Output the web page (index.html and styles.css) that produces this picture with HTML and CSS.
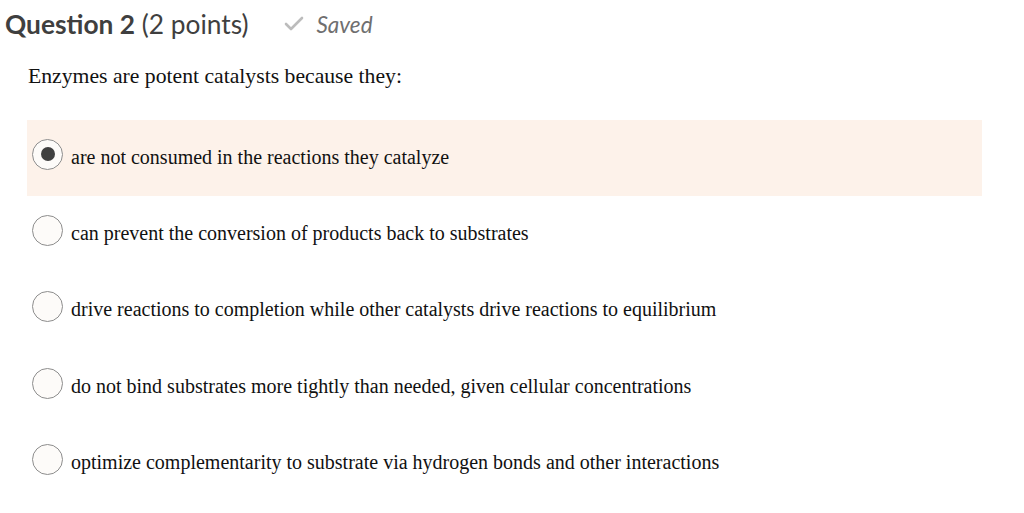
FILE: index.html
```html
<!DOCTYPE html>
<html>
<head>
<meta charset="utf-8">
<link rel="stylesheet" href="styles.css">
</head>
<body>
<div class="header">
  <h2 class="title"><span class="qnum">Question 2</span> <span class="pts">(2 points)</span></h2>
  <span class="saved">
    <svg class="check" width="20" height="15" viewBox="0 0 20 15"><path d="M2 8 L7 13 L18 2" fill="none" stroke="#bcbcbc" stroke-width="2.6" stroke-linecap="round" stroke-linejoin="round"/></svg>
    <span class="saved-text">Saved</span>
  </span>
</div>
<p class="question">Enzymes are potent catalysts because they:</p>
<div class="options">
  <div class="option selected"><span class="radio checked"><span class="dot"></span></span><span class="label">are not consumed in the reactions they catalyze</span></div>
  <div class="option"><span class="radio"></span><span class="label">can prevent the conversion of products back to substrates</span></div>
  <div class="option"><span class="radio"></span><span class="label">drive reactions to completion while other catalysts drive reactions to equilibrium</span></div>
  <div class="option"><span class="radio"></span><span class="label">do not bind substrates more tightly than needed, given cellular concentrations</span></div>
  <div class="option"><span class="radio"></span><span class="label">optimize complementarity to substrate via hydrogen bonds and other interactions</span></div>
</div>
</body>
</html>
```

FILE: styles.css
```css
html, body {
  margin: 0;
  padding: 0;
  background: #ffffff;
}
body {
  width: 1024px;
  height: 513px;
  overflow: hidden;
}
.header {
  display: flex;
  align-items: center;
  padding: 7px 0 0 5px;
  height: 34px;
}
.title {
  margin: 0;
  font-family: Lato, sans-serif;
  font-size: 26.3px;
  color: #3f3f3f;
  font-weight: 400;
  white-space: nowrap;
}
.qnum {
  font-weight: 700;
}
.saved {
  display: flex;
  align-items: center;
  margin-left: 36px;
}
.check {
  margin-right: 12px;
  margin-top: -2px;
}
.saved-text {
  font-family: Lato, sans-serif;
  font-style: italic;
  font-size: 22.5px;
  color: #6f6f6f;
}
.question {
  margin: 22px 0 0 28px;
  font-family: "Liberation Serif", serif;
  font-size: 21.7px;
  color: #111;
  line-height: 26px;
}
.options {
  margin: 31px 0 0 27px;
  width: 955px;
}
.option {
  display: flex;
  align-items: center;
  height: 76.4px;
  padding-left: 5px;
  box-sizing: border-box;
}
.option.selected {
  background: #fdf2ea;
}
.radio {
  width: 29px;
  height: 29px;
  border: 1px solid #8d8d8d;
  border-radius: 50%;
  background: #fdfbf9;
  display: flex;
  align-items: center;
  justify-content: center;
  flex: none;
  margin-right: 8px;
  margin-top: -8px;
}
.dot {
  width: 14px;
  height: 14px;
  border-radius: 50%;
  background: #404040;
}
.label {
  font-family: "Liberation Serif", serif;
  font-size: 20px;
  color: #111;
  white-space: nowrap;
  margin-top: -2px;
}
```
